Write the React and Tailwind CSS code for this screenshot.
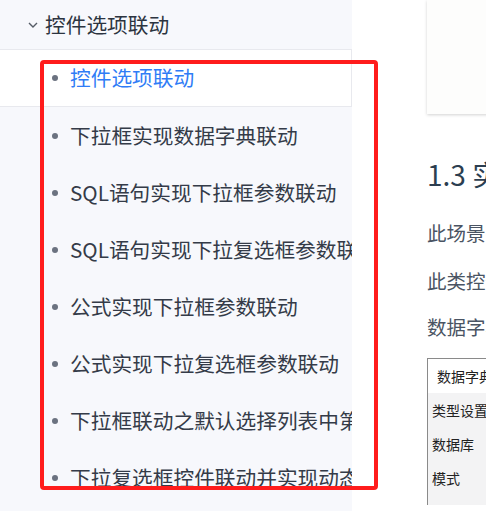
import React from 'react';

const items = [
    '下拉框实现数据字典联动',
    'SQL语句实现下拉框参数联动',
    'SQL语句实现下拉复选框参数联动',
    '公式实现下拉框参数联动',
    '公式实现下拉复选框参数联动',
    '下拉框联动之默认选择列表中第一个值',
    '下拉复选框控件联动并实现动态默认值',
];

const font = { fontFamily: '"Noto Sans CJK SC", "Noto Sans", sans-serif' };

const App = () => {
    return (
        <div className="relative flex w-[486px] h-[511px] overflow-hidden bg-white" style={font}>
            <aside className="w-[352px] shrink-0 bg-[#f7f8fc] flex flex-col">
                <div className="h-[49px] flex items-center pl-[27px] text-[#2c3440] text-[20.7px]">
                    <svg className="w-[12px] h-[12px] mr-[6px] text-[#555c66]" viewBox="0 0 12 12" fill="none" stroke="currentColor" strokeWidth="1.4">
                        <path d="M2 4l4 4 4-4" />
                    </svg>
                    <span className="whitespace-nowrap">控件选项联动</span>
                </div>
                <ul>
                    <li className="h-[58px] bg-white border-y border-r border-[#e8e9ee] flex items-center pl-[52px] text-[20.7px] text-[#2f7cf6] whitespace-nowrap overflow-hidden">
                        <span className="w-[6px] h-[6px] rounded-full bg-[#6b7280] mr-[12px] shrink-0" />
                        控件选项联动
                    </li>
                    {items.map((t) => (
                        <li key={t} className="h-[57px] flex items-center pl-[52px] text-[20.7px] text-[#343b48] whitespace-nowrap overflow-hidden">
                            <span className="w-[6px] h-[6px] rounded-full bg-[#6b7280] mr-[12px] shrink-0" />
                            {t}
                        </li>
                    ))}
                </ul>
            </aside>

            <main className="flex-1 pl-[75px] text-[#4a5463] whitespace-nowrap">
                <div className="h-[114px] bg-[#fdfdfc] shadow-[0_1px_3px_rgba(0,0,0,0.18)]" />
                <h3 className="mt-[40px] text-[28px] leading-[40px] text-[#2c3e50]">1.3 实现步骤</h3>
                <p className="mt-[27px] text-[19.5px] leading-[24px]">此场景下的联动</p>
                <p className="mt-[24px] text-[19.5px] leading-[24px]">此类控件的设置</p>
                <p className="mt-[22px] text-[19.5px] leading-[24px]">数据字典如下</p>
                <div className="mt-[19px] h-[147px] border-l border-t border-[#8a8a8a] bg-[#f3f3f4] text-[14px] text-[#222]">
                    <div className="h-[34px] bg-white flex items-center pl-[9px]">数据字典</div>
                    <div className="h-[34px] flex items-center pl-[4px]">类型设置</div>
                    <div className="h-[34px] flex items-center pl-[4px]">数据库</div>
                    <div className="h-[34px] flex items-center pl-[4px]">模式</div>
                </div>
            </main>

            <div className="absolute left-[40px] top-[60px] w-[338px] h-[430px] border-4 border-[#ff1c1c] rounded-[4px] pointer-events-none" />
        </div>
    );
};

export default App;
